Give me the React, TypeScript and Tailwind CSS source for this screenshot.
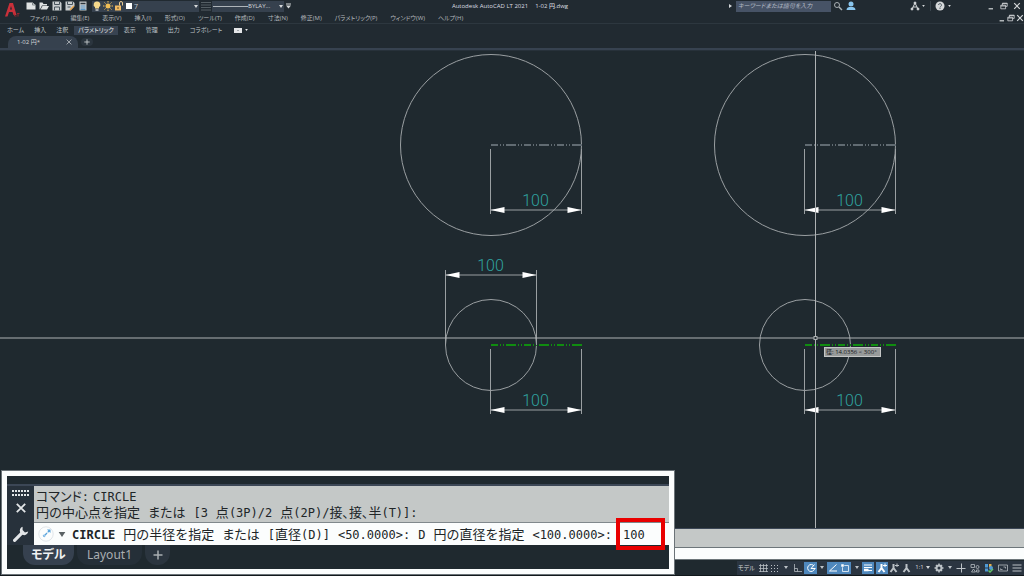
import React from 'react';
import clsx from 'clsx';

const menus = [
  'ファイル(F)', '編集(E)', '表示(V)', '挿入(I)', '形式(O)', 'ツール(T)',
  '作成(D)', '寸法(N)', '修正(M)', 'パラメトリック(P)', 'ウィンドウ(W)', 'ヘルプ(H)',
];

const ribbonTabs = ['ホーム', '挿入', '注釈', 'パラメトリック', '表示', '管理', '出力', 'コラボレート'];

const uiFont = "font-['Open_Sans','Noto_Sans_CJK_JP',sans-serif]";
const kana = "[font-feature-settings:'palt']";

interface IconProps {
  children: React.ReactNode;
  className?: string;
  box?: string;
}

const Icon: React.FC<IconProps> = ({ children, className = 'size-[10px]', box = '0 0 20 20' }) => (
  <svg viewBox={box} className={clsx('block shrink-0', className)} fill="none" stroke="currentColor" strokeWidth="2" aria-hidden="true">
    {children}
  </svg>
);

const Caret: React.FC<{ className?: string }> = ({ className = 'w-1 h-[3px]' }) => (
  <Icon className={className} box="0 0 8 6">
    <path d="M0 0h8L4 6z" fill="currentColor" stroke="none" />
  </Icon>
);

const MinimizeIcon = () => (
  <Icon className="size-2"><path d="M4 17h11" strokeWidth="3" /></Icon>
);

const RestoreIcon = () => (
  <Icon className="size-2"><path d="M6 8V3h12v8h-4M2 8h12v9H2zM2 10h12M6 4h12" /></Icon>
);

const CloseIcon = () => (
  <Icon className="size-2"><path d="M3 3l14 14M17 3L3 17" strokeWidth="3" /></Icon>
);

const WindowButtons: React.FC<{ name: string; className: string }> = ({ name, className }) => (
  <div className={clsx('flex items-center text-[#d5d8da]', className)}>
    <button aria-label={`${name} 最小化`}><MinimizeIcon /></button>
    <button aria-label={`${name} 元に戻す`}><RestoreIcon /></button>
    <button aria-label={`${name} 閉じる`}><CloseIcon /></button>
  </div>
);

const TitleBar = () => (
  <div className="relative flex h-3 items-center">
    <button aria-label="新規" className="ml-[26px] text-[#dfe2e3]">
      <Icon><path d="M1 3h12l6 5v9H1z" fill="currentColor" stroke="none" /><path d="M13 3v5h6" stroke="#7f8789" /></Icon>
    </button>
    <button aria-label="開く" className="ml-[3px] text-[#dfe2e3]">
      <Icon><path d="M1 17V3h6l2 3h7v3H6L3 15z" fill="currentColor" stroke="none" /><path d="M7 10h13l-4 7H3z" fill="currentColor" stroke="none" /></Icon>
    </button>
    <button aria-label="上書き保存" className="ml-[3px] text-[#c9cdcf]">
      <Icon><path d="M1 1h15l3 3v15H1z" fill="currentColor" stroke="none" /><path d="M5 1v6h10V1M5 19v-7h10v7" stroke="#48545c" /></Icon>
    </button>
    <button aria-label="名前を付けて保存" className="ml-[3px] text-[#c9cdcf]">
      <Icon><path d="M1 1h15l3 3v6l-8 9H1z" fill="currentColor" stroke="none" /><path d="M5 1v6h10V1M5 12h6" stroke="#48545c" /><path d="M10 18l8-8" stroke="#e3a14a" strokeWidth="3" /></Icon>
    </button>
    <button aria-label="印刷" className="ml-[3px] text-[#c9cdcf]">
      <Icon><path d="M3 1h14v18H3z" fill="currentColor" stroke="none" /><path d="M5 5h10" stroke="#2c363d" strokeWidth="3" /><path d="M5 10h10M5 14h10M5 17h10" stroke="#5694c5" /></Icon>
    </button>
    <div className="ml-1 flex h-[11px] w-[107px] items-center gap-[1px] bg-[#36414e]">
      <Icon><path d="M10 1a6 6 0 0 1 4 11v3H6v-3a6 6 0 0 1 4-11z" fill="#f5d98c" stroke="none" /><path d="M7 18h6" stroke="#c9cdcf" strokeWidth="3" /></Icon>
      <Icon><circle cx="10" cy="10" r="5" fill="#f0bd55" stroke="none" /><path d="M10 0v3M10 17v3M0 10h3M17 10h3M3 3l2 2M15 15l2 2M17 3l-2 2M5 15l-2 2" stroke="#f0bd55" /></Icon>
      <Icon><path d="M2 9h12v10H2z" fill="#f3bb62" stroke="none" /><path d="M11 9V4a3 3 0 0 1 6 0v5" stroke="#e8c98f" /><path d="M8 12v4" stroke="#5b4d35" /></Icon>
      <span className="ml-[1px] size-[6px] bg-white" />
      <select aria-label="画層" className="ml-[1px] grow appearance-none text-[7px] leading-[11px] text-[#c8ccd0] outline-none">
        <option>7</option>
      </select>
      <Caret className="mr-[1px] h-[3px] w-1 text-[#d5d8da]" />
    </div>
    <button aria-label="線の太さ" className="ml-[2px] text-[#8b949b]">
      <Icon><path d="M1 3h18M1 8h18M1 13h18M1 18h18" strokeDasharray="2 2" /></Icon>
    </button>
    <div className="ml-[1px] flex h-[11px] w-[72px] items-center bg-[#36414e]">
      <span className="ml-[1px] h-px w-[35px] bg-[#aeb4b9]" />
      <select aria-label="線種" className="grow appearance-none text-[6px] leading-[11px] text-[#d5d8da] outline-none">
        <option>BYLAY...</option>
      </select>
      <Caret className="mr-[1px] h-[3px] w-1 text-[#d5d8da]" />
    </div>
    <button aria-label="クイック アクセス" className="ml-[2px] text-[#d5d8da]">
      <Icon className="h-[6px] w-[5px]" box="0 0 10 12"><path d="M0 2h10" /><path d="M0 5h10l-5 6z" fill="currentColor" stroke="none" /></Icon>
    </button>
    <h1 className="absolute inset-x-0 top-[1px] mx-auto flex w-fit gap-[7px] whitespace-nowrap pr-1 text-[6px] leading-[11px] font-medium text-[#dcdfe1]">
      <span>Autodesk AutoCAD LT 2021</span>
      <span>1-02 円.dwg</span>
    </h1>
    <div className="relative ml-auto flex items-center">
      <Icon className="mr-1 h-1 w-[3px] text-[#d5d8da]" box="0 0 6 8"><path d="M0 0l6 4-6 4z" fill="currentColor" stroke="none" /></Icon>
      <input
        aria-label="検索"
        placeholder="キーワードまたは語句を入力"
        className={clsx('h-[11px] w-[95px] bg-[#475366] pl-[2px] text-[6px] italic placeholder:text-[#b5bcc6]', kana)}
      />
      <button aria-label="検索する" className="ml-[2px] text-[#aab0b4]">
        <Icon><circle cx="8" cy="8" r="5" /><path d="M12 12l6 6" strokeWidth="3" /></Icon>
      </button>
      <button aria-label="サインイン" className="ml-[3px] text-[#8ac6ee]">
        <Icon><circle cx="10" cy="6" r="5" fill="currentColor" stroke="none" /><path d="M1 18c0-5 4-6 9-6s9 1 9 6z" fill="currentColor" stroke="none" /></Icon>
      </button>
      <button aria-label="アプリ" className="ml-[54px] flex items-center gap-[2px] text-[#d5d8da]">
        <Icon><path d="M10 4L4 16M10 4l6 12M6 12h8" /><circle cx="10" cy="4" r="2" fill="currentColor" /><circle cx="4" cy="16" r="2" fill="currentColor" /><circle cx="16" cy="16" r="2" fill="currentColor" /></Icon>
        <Caret className="h-[2px] w-[3px]" />
      </button>
      <span className="ml-[5px] h-[10px] w-px bg-[#39444c]" />
      <button aria-label="ヘルプ" className="ml-[4px] flex items-center gap-[3px] text-[#d5d8da]">
        <Icon><circle cx="10" cy="10" r="9" fill="currentColor" stroke="none" /><path d="M7 8a3 3 0 1 1 4 3l-1 2M10 14v2" stroke="#58636b" /></Icon>
        <Caret className="h-[2px] w-[3px]" />
      </button>
      <WindowButtons name="アプリ" className="ml-9 mr-[3px] gap-[5px]" />
    </div>
  </div>
);

const Header = () => (
  <header className="relative shrink-0 bg-[#212a31]">
    <button aria-label="AutoCAD LT" className="absolute left-1 top-[2px] z-10">
      <Icon className="size-4" box="0 0 32 32">
        <path d="M2 29L11 2h7l7 24h-6l-2-6H10l-3 9zM12 15h4l-2-7z" fill="#c9303a" fillRule="evenodd" stroke="none" />
        <path d="M21 23v5h4M26 23h5M28 23v6" stroke="#b0262f" strokeWidth="1.5" />
      </Icon>
    </button>
    <TitleBar />
    <nav className={clsx('flex h-3 items-center gap-[13px] border-b border-[#2d373f] pl-[30px] text-[6px] leading-3 text-[#b4b9bd]', kana)}>
      {menus.map(menu => (
        <button key={menu} className="whitespace-nowrap">{menu}</button>
      ))}
      <WindowButtons name="図面" className="ml-auto gap-[1px]" />
    </nav>
    <div className={clsx('flex h-3 items-center gap-[2px] pl-[3px] text-[6px] text-[#bcc1c5]', kana)}>
      {ribbonTabs.map(tab => (
        <button
          key={tab}
          className={clsx('h-[9px] px-1 leading-[9px] whitespace-nowrap', tab === 'パラメトリック' && 'bg-[#384351] text-[#e3e5e7]')}
        >
          {tab}
        </button>
      ))}
      <button aria-label="リボン表示" className="ml-[6px] flex items-center gap-[3px] text-[#e3e5e7]">
        <Icon className="h-[5px] w-2" box="0 0 16 10"><path d="M0 0h16v10H0z" fill="currentColor" stroke="none" /><path d="M6 6l2-2 2 2z" fill="#58636b" stroke="none" /></Icon>
        <Caret className="h-[2px] w-[3px]" />
      </button>
    </div>
    <div className="flex h-3 items-stretch pl-2">
      <div className="flex w-[70px] items-center justify-between rounded-t-lg bg-[#36414e] pl-[9px] pr-[6px] text-[6px] text-[#d5d8da]">
        <button>1-02 円*</button>
        <button aria-label="タブを閉じる" className="text-[#aab0b4]"><Icon className="size-[6px]"><path d="M2 2l16 16M18 2L2 18" strokeWidth="3" /></Icon></button>
      </div>
      <button aria-label="新しいタブ" className="ml-[3px] mt-[2px] mb-[2px] flex w-3 items-center justify-center rounded bg-[#2b353e] text-[#c5c9cc]">
        <Icon className="size-[6px]"><path d="M10 1v18M1 10h18" strokeWidth="3" /></Icon>
      </button>
    </div>
    <div className="h-[3px] border-b border-[#27313a] bg-[#374250]" />
  </header>
);

interface DimensionProps {
  x: number;
  y: number;
  from: number;
  to: number;
}

// 91px wide linear dimension with two extension lines
const Dimension: React.FC<DimensionProps> = ({ x, y, from, to }) => (
  <g>
    <path d={`M${x} ${from}V${to}M${x + 91} ${from}V${to}M${x} ${y}h91`} stroke="#9a9fa2" />
    <path d={`M${x} ${y}l14 -3v6zM${x + 91} ${y}l-14 -3v6z`} fill="#fff" />
    <text x={x + 45} y={y - 4} textAnchor="middle" fill="#2fa3a0" className="font-['Roboto',sans-serif] text-[16px] font-light">100</text>
  </g>
);

const CenterLine: React.FC<{ x: number; y: number; color: string }> = ({ x, y, color }) => (
  <path d={`M${x} ${y}h91`} stroke={color} strokeWidth="2" strokeDasharray="7 2 1 2 1 2 10 2 1 2 1 2" />
);

const DrawingArea = () => (
  <main className="relative min-h-0 grow overflow-hidden bg-[#1f292f]">
    <svg className="absolute inset-0 size-full" fill="none" role="img" aria-label="図面">
      <g transform="translate(0 -51)">
        <g stroke="#9a9fa2">
          <circle cx="491" cy="145" r="90.5" />
          <circle cx="805" cy="145" r="90.5" />
          <circle cx="491" cy="345" r="45.5" />
          <circle cx="805" cy="345" r="45.5" />
        </g>
        <CenterLine x={491} y={145} color="#616b72" />
        <CenterLine x={805} y={145} color="#616b72" />
        <CenterLine x={491} y={345} color="#108c10" />
        <CenterLine x={805} y={345} color="#108c10" />
        <Dimension x={490.5} y={210} from={149} to={214} />
        <Dimension x={804.5} y={210} from={149} to={214} />
        <Dimension x={445.5} y={275} from={270} to={345} />
        <Dimension x={490.5} y={410} from={349} to={414} />
        <Dimension x={804.5} y={410} from={349} to={414} />
      </g>
      <g stroke="#aeb2b4">
        <line x1="0" x2="100%" y1="287" y2="287" />
        <line x1="815.5" x2="815.5" y1="0" y2="100%" />
        <rect x="814" y="285.5" width="3" height="3" fill="#1f292f" />
      </g>
    </svg>
    <output className="absolute left-[824px] top-[296px] flex h-[10px] w-[57px] items-center border border-[#c4c6c6] bg-[#979a9a] pl-[1px] text-[6px] leading-none whitespace-nowrap text-[#16191b]">
      径: 14.0356 &lt; 300°
    </output>
  </main>
);

interface ToolProps {
  name: string;
  className?: string;
  active?: boolean;
  children: React.ReactNode;
}

const Tool: React.FC<ToolProps> = ({ name, className = 'w-3', active, children }) => (
  <button
    aria-label={name}
    className={clsx('flex h-3 shrink-0 items-center justify-center', className, active ? 'bg-[#4f88bd] text-white' : 'text-[#bcc2c7]')}
  >
    {children}
  </button>
);

const Annotation = ({ mark }: { mark?: boolean }) => (
  <Icon>
    <path d="M9 2v8L3 18M9 10l6 8" strokeWidth="4" />
    {mark && <path d="M16 1v7M12 5h8" stroke="currentColor" />}
  </Icon>
);

const StatusBar = () => (
  <footer className="flex h-4 shrink-0 items-center justify-end border-b border-[#11181c] bg-[#1f292f]">
    <div className="flex h-[14px] items-center bg-[#2b3541]">
      <button className={clsx('h-3 w-[19px] text-[6px] leading-3 text-[#d5d8da]', kana)}>モデル</button>
      <Tool name="グリッド" className="w-[13px]"><Icon><path d="M5 2v16M11 2v16M17 2v16M2 5h18M2 11h18M2 17h18" strokeWidth="1.5" /></Icon></Tool>
      <Tool name="スナップ"><Icon><path d="M2 5h18M2 11h18M2 17h18" strokeDasharray="2 4" /></Icon></Tool>
      <Tool name="スナップ設定" className="w-[10px]"><Caret /></Tool>
      <Tool name="直交モード" className="w-[13px]"><Icon><path d="M3 2v15h15M3 11h6v6" strokeWidth="1.5" /></Icon></Tool>
      <Tool name="極トラッキング" className="w-[13px]" active><Icon><path d="M16 6a7 7 0 1 0 1 6M10 11h9M10 11l7-8" /></Icon></Tool>
      <Tool name="極設定" className="w-[10px]"><Caret /></Tool>
      <Tool name="Oスナップ トラッキング" active><Icon><path d="M17 3L3 16h15" /></Icon></Tool>
      <Tool name="オブジェクト スナップ" active><Icon><path d="M5 5h12v12H5z" strokeWidth="1.5" /><path d="M2 2h6v6H2z" fill="currentColor" stroke="#4f88bd" strokeWidth="1" /></Icon></Tool>
      <Tool name="Oスナップ設定" className="w-[11px]"><Caret /></Tool>
      <Tool name="線の太さ表示" active><Icon><path d="M2 4h16M2 9h16M2 15h16" /><path d="M2 14h9" strokeWidth="5" /></Icon></Tool>
      <Tool name="注釈オブジェクト" className="ml-[2px] w-3" active><Annotation mark /></Tool>
      <Tool name="自動尺度"><Annotation mark /></Tool>
      <Tool name="注釈尺度" className="w-[13px]"><Annotation /></Tool>
      <button className="flex h-3 w-[19px] items-center justify-center gap-[2px] text-[6px] text-[#d5d8da]">1:1<Caret /></button>
      <Tool name="ワークスペース" className="w-[14px]"><Icon><circle cx="10" cy="10" r="5" strokeWidth="4" /><path d="M10 1v4M10 15v4M1 10h4M15 10h4M4 4l3 3M13 13l3 3M16 4l-3 3M7 13l-3 3" strokeWidth="3" /></Icon></Tool>
      <Tool name="ワークスペース設定" className="w-2"><Caret /></Tool>
      <Tool name="注釈モニター" className="w-[14px]"><Icon><path d="M11 1v18M1 11h18" /></Icon></Tool>
      <Tool name="選択の循環" className="w-[14px]"><Icon><path d="M2 3h7v6H2zM7 12l4 6H3z" strokeWidth="1.5" /><circle cx="15" cy="8" r="3" strokeWidth="1.5" /><path d="M13 14h5v4h-5z" strokeWidth="1.5" /></Icon></Tool>
      <Tool name="グラフィックス" className="w-[14px]"><Icon><path d="M2 2h6v7H2zM2 11h6v6H2z" fill="#4f9ad6" stroke="none" /><path d="M10 2h5v6h-5z" fill="#e2b04c" stroke="none" /><circle cx="14" cy="10" r="4" fill="#4f9ad6" stroke="none" /><path d="M9 15l3 3 6-6" stroke="#64c46a" strokeWidth="3" /></Icon></Tool>
      <Tool name="フルスクリーン" className="w-[14px]"><Icon><path d="M1 4h18v12H1zM11 8h4v3M9 13H5v-2" strokeWidth="1.5" /></Icon></Tool>
      <Tool name="カスタマイズ" className="w-[14px]"><Icon><path d="M1 4h18M1 10h18M1 16h18" /></Icon></Tool>
    </div>
  </footer>
);

const cjk = 'text-[13px]';

const CommandPanel = () => (
  <section className="absolute bottom-[2px] left-[2px] w-full max-w-[672px] border-5 border-[#fbfdfd] bg-[#1f292f] outline outline-[#6b7378]">
    <div className="h-2" />
    <div className="h-[2px] bg-[#3c4756]" />
    <div className="flex">
      <div className="flex w-[27px] shrink-0 flex-col items-center bg-[#27313b] pt-1 text-[#e3e6e8]">
        <Icon className="h-[6px] w-[18px]" box="0 0 18 6"><path d="M0 1h18M0 5h18" strokeDasharray="2 1" /></Icon>
        <button aria-label="コマンド ウィンドウを閉じる" className="mt-[6px]">
          <Icon className="size-3"><path d="M3 3l14 14M17 3L3 17" strokeWidth="3" /></Icon>
        </button>
        <button aria-label="カスタマイズ" className="mt-3">
          <Icon className="size-4"><path d="M2 18l9-9" strokeWidth="4" strokeLinecap="round" /><path d="M12 1a5 5 0 0 0-3 7 5 5 0 0 0 3 3 5 5 0 0 0 7-4l-4 1-3-3z" fill="currentColor" stroke="none" /></Icon>
        </button>
      </div>
      <div className="min-w-0 grow font-['DejaVu_Sans_Mono','Noto_Sans_CJK_JP',monospace] text-[12px] whitespace-nowrap text-[#202527]">
        <div className="h-[37px] border-b border-[#80888c] bg-[#c4c8c7] pl-[2px] pt-[3px]">
          <p className="flex h-4 items-center gap-1">
            <span><span className={clsx(cjk, kana)}>コマンド</span>:</span>
            <span>CIRCLE</span>
          </p>
          <p className="flex h-4 items-center gap-2">
            <span className={cjk}>円の中心点を指定</span>
            <span className={clsx(cjk, kana)}>または</span>
            <span>[3</span>
            <span><span className={cjk}>点</span>(3P)/2</span>
            <span><span className={cjk}>点</span>(2P)/<span className={cjk}><span className={kana}>接、接、</span>半</span>(T)]:</span>
          </p>
        </div>
        <div className="flex h-[22px] items-center bg-[#fbfdfd]">
          <button aria-label="最近使用したコマンド" className="flex w-8 shrink-0 items-center justify-end gap-[3px] text-[#5b6265]">
            <Icon className="size-[18px]"><circle cx="10" cy="10" r="8" stroke="#dce2e6" strokeWidth="1" /><path d="M9 11l5-5" stroke="#59a4dc" strokeWidth="1.5" strokeDasharray="3 1" /><path d="M11 5h4v4z" fill="#59a4dc" stroke="none" /><circle cx="8" cy="12" r="1" stroke="#59a4dc" strokeWidth="1" /></Icon>
            <Caret className="h-[5px] w-2" />
          </button>
          <label htmlFor="command" className="flex items-center gap-2 pl-[6px] pt-[2px]">
            <b>CIRCLE</b>
            <span className={cjk}>円の半径を指定</span>
            <span className={clsx(cjk, kana)}>または</span>
            <span>[<span className={cjk}>直径</span>(D)]</span>
            <span>&lt;50.0000&gt;:</span>
            <span>D</span>
            <span className={cjk}>円の直径を指定</span>
            <span>&lt;100.0000&gt;:</span>
          </label>
          <div className="relative ml-auto mr-1 flex h-[22px] w-[49px] shrink-0 items-center">
            <input id="command" defaultValue="100" className="w-full pl-[7px] pt-[2px] outline-none" />
            <span className="pointer-events-none absolute inset-x-0 -inset-y-[5px] border-4 border-[#e90000]" />
          </div>
        </div>
      </div>
    </div>
    <div className="mb-1 flex h-5 items-stretch gap-[3px] pl-4 font-['Noto_Sans','Noto_Sans_CJK_JP',sans-serif] text-[12px] leading-5 text-[#a9aeb2]">
      <button className={clsx('w-[51px] rounded-b-xl bg-[#36414f] font-bold text-[#f0f1f2]', kana)}>モデル</button>
      <button className="w-[65px] rounded-b-xl bg-[#252f38]">Layout1</button>
      <button aria-label="新しいレイアウト" className="flex w-[25px] items-center justify-center rounded-b-xl bg-[#2b353f]">
        <Icon><path d="M10 1v18M1 10h18" strokeWidth="3" /></Icon>
      </button>
    </div>
  </section>
);

export default function App() {
  return (
    <div className={clsx('relative flex h-screen flex-col overflow-hidden bg-[#1f292f]', uiFont)}>
      <Header />
      <DrawingArea />
      <div className="ml-3 h-5 shrink-0 border-y border-[#6d767a] border-t-[#3c4756] bg-[#c4c8c7]" />
      <div className="ml-3 h-3 shrink-0 border-b border-[#6d767a] bg-[#fbfdfd]" />
      <StatusBar />
      <CommandPanel />
    </div>
  );
}
